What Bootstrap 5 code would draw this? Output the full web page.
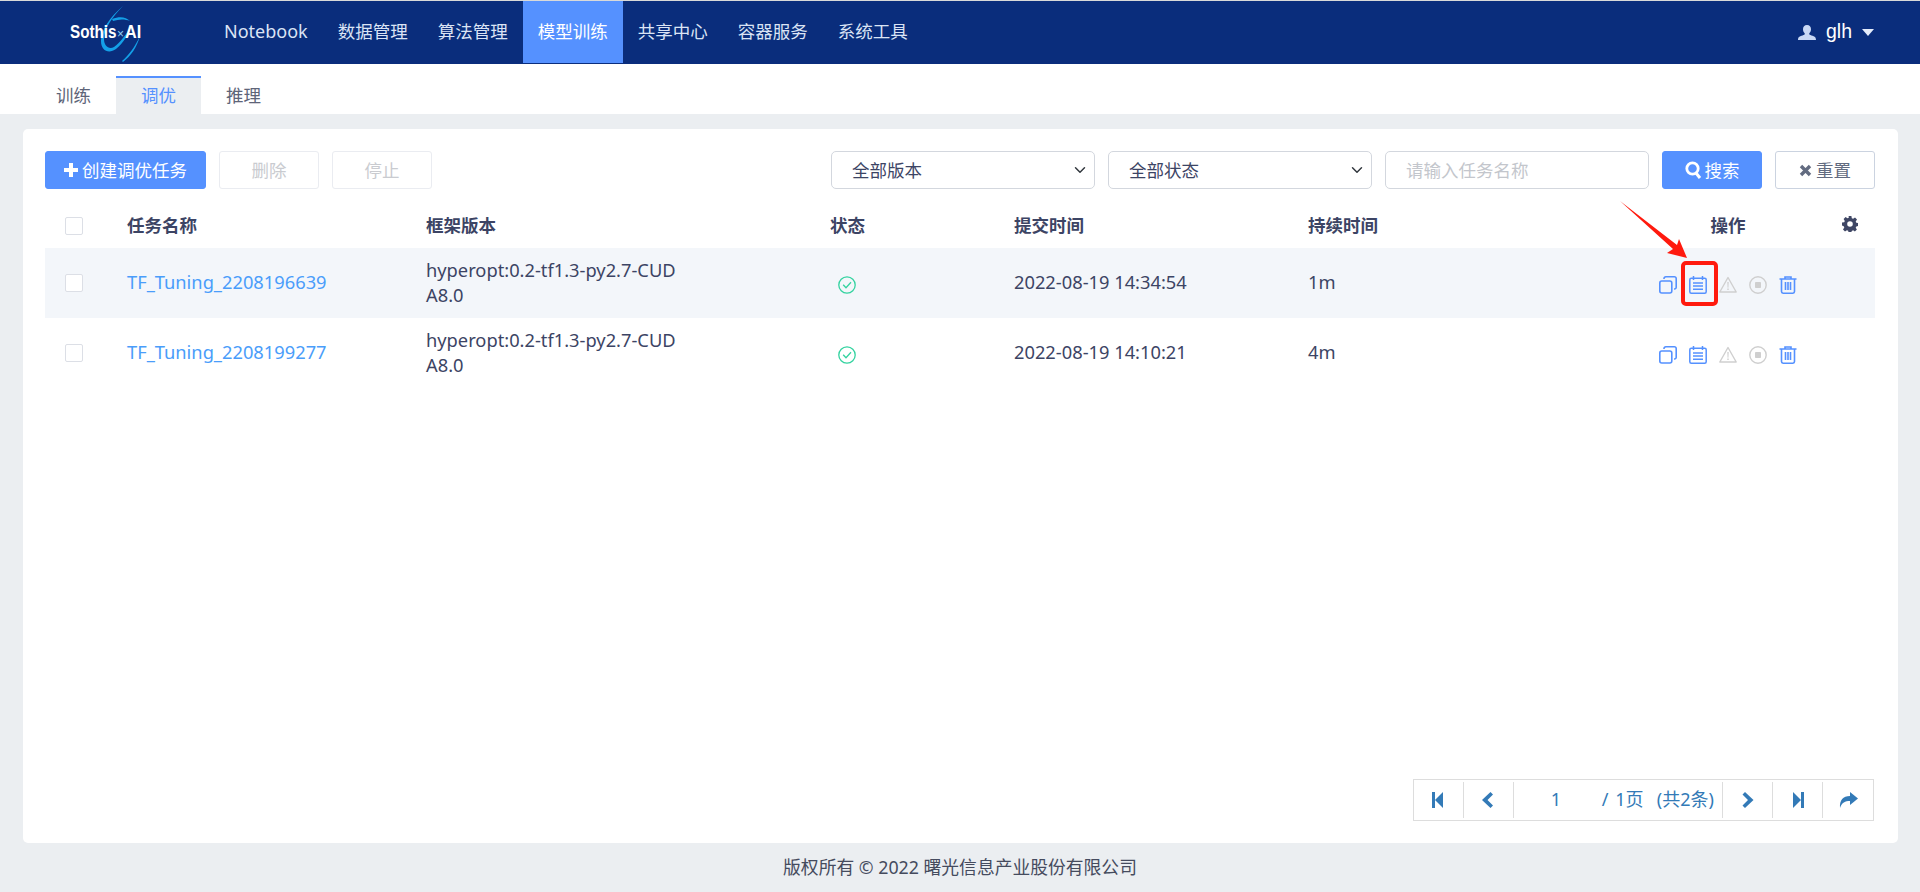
<!DOCTYPE html>
<html lang="zh-CN">
<head>
  <meta charset="UTF-8">
  <title>Sothis AI</title>
  <link href="https://cdn.jsdelivr.net/npm/bootstrap@5.3.0/dist/css/bootstrap.min.css" rel="stylesheet">
  <style>
    html, body { height: 892px; overflow: hidden; }
    body {
      font-family: "Noto Sans", "Noto Sans CJK SC", sans-serif;
      font-size: 17.5px;
      color: #3c4464;
      background: #ebeef1;
    }
    .top-bar { height: 64px; background: #0a2d7c; border-top: 1px solid #d9d9d9; color: #fff; }
    .logo-box { width: 209px; height: 63px; position: relative; flex: none; }
    .logo-box svg { position: absolute; left: 0; top: 0; }
    .logo-text {
      position: absolute; top: 19px; left: 70px; font-family: "Liberation Sans", sans-serif;
      font-weight: 700; font-size: 19px; color: #fff; line-height: 24px;
      transform: scaleX(.8); transform-origin: left center;
    }
    .logo-x { position: absolute; top: 21px; left: 117px; font-family: "Liberation Sans", sans-serif; font-size: 12px; color: #8fd0f5; line-height: 24px; }
    .logo-ai { position: absolute; top: 19px; left: 125px; font-family: "Liberation Sans", sans-serif;
      font-weight: 700; font-size: 19px; color: #fff; line-height: 24px; transform: scaleX(.85); transform-origin: left center; }
    .top-link { padding: 0 15px; height: 62px; line-height: 60px; color: #dbe4f5; text-decoration: none; white-space: nowrap; }
    .top-link.on { background: #5591ff; color: #fff; }
    .latin-link { font-size: 18px; }
    .user-box { margin-right: 46px; color: #fff; font-family: "Liberation Sans", sans-serif; font-size: 19.5px; gap: 10px; height: 62px; }
    .sub-bar { height: 50px; background: #fff; padding: 12px 0 0 31px; }
    .sub-tab { width: 85px; height: 38px; text-align: center; line-height: 34px; color: #5e6478; text-decoration: none; border-top: 2px solid transparent; }
    .sub-tab.on { background: #ebeef1; color: #5591ff; border-top-color: #5591ff; }
    .main-wrap { flex: 1 1 auto; padding: 15px 22px 0 23px; min-height: 0; }
    .main-card { height: 714px; background: #fff; border-radius: 5px; padding: 22px 23px 22px 22px; position: relative; }
    .tool-btn { height: 38px; font-size: 17.5px; padding: 0; border-radius: 3px; line-height: 36px; display: inline-flex; align-items: center; justify-content: center; }
    .btn-make { width: 161px; background: #5591ff; border: 1px solid #5591ff; color: #fff; gap: 4px; }
    .btn-off { width: 100px; background: #fff; border: 1px solid #eaecf1; color: #c9cbd0; }
    .btn-find { width: 100px; background: #5591ff; border: 1px solid #5591ff; color: #fff; gap: 3px; }
    .btn-clear { width: 100px; background: #fff; border: 1px solid #cbd3e0; color: #626b80; gap: 4px; }
    .pick-box, .name-box {
      height: 38px; font-size: 17.5px; border: 1px solid #d3d7de; border-radius: 5px; color: #3c4464;
      padding: 0 20px; box-shadow: none; line-height: 36px;
    }
    .pick-box { width: 264px; background-position: right 6px center; }
    .name-box { width: 264px; }
    .name-box::placeholder { color: #c3c6cc; opacity: 1; }
    .gap-left { margin-left: 13px; }
    .task-table { table-layout: fixed; width: 1830px; margin: 14px 0 0; --bs-table-bg: transparent; color: #3c4464; }
    .task-table th, .task-table td { padding: 0; color: #3c4464; vertical-align: middle; }
    .task-table th { height: 45px; font-weight: 700; font-size: 17.5px; }
    .task-table td { height: 70px; line-height: 25px; font-size: 18.3px; }
    .task-table td.lift-a { padding-bottom: 4px; }
    .task-table td.lift-b { padding-bottom: 2px; }
    .task-table tr.hl td { background: #f3f6fa; }
    .task-table td a { color: #4a9dfa; text-decoration: none; }
    .box-tick { width: 18px; height: 18px; border: 1px solid #dcdfe6; border-radius: 2px; background: #fff; margin-left: 20px; }
    .fw-cell { width: 256px; word-break: break-all; }
    .ops { gap: 12px; padding: 4px 0 0 78px; align-items: center; }
    .gear-spot { position: absolute; right: 17px; top: 13px; line-height: 0; }
    .op-head { position: relative; text-align: center; }
    .pager {
      position: absolute; left: 1390px; top: 650px; width: 461px; height: 42px; border: 1px solid #ddd;
      color: #337ab7; font-size: 18px;
    }
    .pager-cell { width: 50px; height: 36px; border-right: 1px solid #ddd; }
    .pager-cell:last-child { border-right: 0; }
    .pager-mid { width: 210px; height: 36px; border-right: 1px solid #ddd; position: relative; white-space: nowrap; }
    .pager-mid span { position: absolute; top: 3px; line-height: 28px; word-spacing: 2px; }
    .foot-line { height: 49px; line-height: 48px; text-align: center; color: #454b5e; font-size: 17.8px; }
    .mark-box { position: absolute; left: 1658px; top: 132px; width: 37px; height: 45px; border: 4px solid #ff1a0e; border-radius: 5px; }
    .mark-arrow { position: absolute; left: 1590px; top: 65px; }
  </style>
</head>
<body class="d-flex flex-column">
<svg width="0" height="0" class="position-absolute">
  <symbol id="i-copy" viewBox="0 0 18 18"><g fill="none" stroke="#5591ff" stroke-width="1.6"><rect x=".8" y="5" width="12" height="12" rx="2"/><path d="M5 3V2.600A1.800 1.800 0 0 1 6.800.8h8.600a1.800 1.800 0 0 1 1.800 1.800v8.600a1.800 1.800 0 0 1-1.800 1.800H15"/></g></symbol>
  <symbol id="i-note" viewBox="0 0 18 18"><g fill="none" stroke="#5591ff" stroke-width="1.5"><rect x=".8" y="2.200" width="16.400" height="15" rx="1.500"/><path d="M4.500 0v4M13.500 0v4M4 7h10M4 10h10M4 13.300h10"/></g></symbol>
  <symbol id="i-warn" viewBox="0 0 18 18"><g fill="none" stroke="#cfcfcf" stroke-width="1.4"><path d="M9 1.500 17.200 16H.8Z" stroke-linejoin="round"/></g><path d="M8.300 6h1.400l-.3 5.800h-.8ZM8.300 12.600h1.400V14H8.300Z" fill="#cfcfcf"/></symbol>
  <symbol id="i-halt" viewBox="0 0 18 18"><circle cx="9" cy="9" r="8.200" fill="none" stroke="#cfcfcf" stroke-width="1.4"/><rect x="6" y="6" width="6" height="6" rx=".8" fill="#cfcfcf"/></symbol>
  <symbol id="i-bin" viewBox="0 0 18 18"><g fill="none" stroke="#5591ff" stroke-width="1.6"><path d="M.5 3h17M6 3V1h6v2M2.500 3v12.600A1.600 1.600 0 0 0 4.100 17.200h9.800a1.600 1.600 0 0 0 1.600-1.600V3M6.500 6v8M9 6v8M11.500 6v8"/></g></symbol>
  <symbol id="i-ok" viewBox="0 0 18 18"><circle cx="9" cy="9" r="8.200" fill="none" stroke="#34d3a0" stroke-width="1.3"/><path d="M5.200 8.800 8 11.800l5-5.600" fill="none" stroke="#34d3a0" stroke-width="1.3"/></symbol>
</svg>

<nav class="top-bar d-flex align-items-start flex-none">
  <div class="logo-box">
    <svg width="209" height="63" viewBox="0 0 209 63">
      <path d="M123 5C112 16 104 28 104 38c0 7 5 11 10 8 6-4 13-14 18-22-3 8-9 19-16 24-7 5-15 2-15-8 0-11 9-24 22-35Z" fill="#14a0e8"/>
      <path d="M122 60c6-5 13-14 18-25-3 11-9 20-17 26Z" fill="#14a0e8"/>
      <path d="M112 18c8-3 14-2 18 2-5-2-11-2-17 0Z" fill="#14a0e8"/>
    </svg>
    <span class="logo-text">Sothis</span>
    <span class="logo-x">×</span>
    <span class="logo-ai">AI</span>
  </div>
  <a class="top-link latin-link" href="#">Notebook</a>
  <a class="top-link" href="#">数据管理</a>
  <a class="top-link" href="#">算法管理</a>
  <a class="top-link on" href="#">模型训练</a>
  <a class="top-link" href="#">共享中心</a>
  <a class="top-link" href="#">容器服务</a>
  <a class="top-link" href="#">系统工具</a>
  <div class="user-box ms-auto d-flex align-items-center">
    <svg width="18" height="15" viewBox="0 0 18 15"><path d="M9 0c2.600 0 4 1.800 4 4.200 0 1.800-.8 3.200-1.800 4.200 0 1 .6 1.500 2.300 2 2.500.8 4.500 1.200 4.500 4.600H0c0-3.400 2-3.800 4.500-4.600 1.700-.5 2.300-1 2.300-2C5.800 7.400 5 6 5 4.200 5 1.800 6.400 0 9 0Z" fill="#c9d8f5"/></svg>
    <span>glh</span>
    <svg width="12" height="7" viewBox="0 0 12 7"><path d="M0 0h12L6 7Z" fill="#e4ecfb"/></svg>
  </div>
</nav>

<div class="sub-bar d-flex">
  <a class="sub-tab" href="#">训练</a>
  <a class="sub-tab on" href="#">调优</a>
  <a class="sub-tab" href="#">推理</a>
</div>

<div class="main-wrap">
  <div class="main-card">
    <div class="d-flex align-items-center">
      <button class="tool-btn btn-make" type="button">
        <svg width="14" height="14" viewBox="0 0 14 14"><path d="M5 0h4v5h5v4H9v5H5V9H0V5h5Z" fill="#fff"/></svg>创建调优任务
      </button>
      <button class="tool-btn btn-off gap-left" type="button">删除</button>
      <button class="tool-btn btn-off gap-left" type="button">停止</button>
      <select class="form-select pick-box ms-auto"><option>全部版本</option></select>
      <select class="form-select pick-box gap-left"><option>全部状态</option></select>
      <input class="form-control name-box gap-left" type="text" placeholder="请输入任务名称">
      <button class="tool-btn btn-find gap-left" type="button">
        <svg width="17" height="18" viewBox="0 0 17 18"><circle cx="7.500" cy="7.500" r="5.700" fill="none" stroke="#fff" stroke-width="2.800"/><path d="m11 12 4 5" stroke="#fff" stroke-width="3"/></svg>搜索
      </button>
      <button class="tool-btn btn-clear gap-left" type="button">
        <svg width="13" height="13" viewBox="0 0 13 13"><path d="M2 2l9 9M11 2l-9 9" stroke="#626b80" stroke-width="3.400"/></svg>重置
      </button>
    </div>

    <table class="table table-borderless align-middle task-table">
      <colgroup><col style="width:82px"><col style="width:299px"><col style="width:404px"><col style="width:184px"><col style="width:294px"><col style="width:273px"><col style="width:294px"></colgroup>
      <thead>
        <tr>
          <th><div class="box-tick"></div></th>
          <th>任务名称</th>
          <th>框架版本</th>
          <th>状态</th>
          <th>提交时间</th>
          <th>持续时间</th>
          <th class="op-head">操作
            <span class="gear-spot">
              <svg width="16" height="16" viewBox="0 0 16 16"><path fill-rule="evenodd" d="M6.600 0h2.800l.4 2.200 1.300.6 1.900-1.200 2 2-1.300 1.800.6 1.400 2.200.4v2.800l-2.200.4-.6 1.300 1.200 1.900-2 2-1.800-1.300-1.400.6-.4 2.100H6.600l-.4-2.200-1.300-.6-1.900 1.200-2-2 1.300-1.800-.6-1.400L0 9.400V6.600l2.200-.4.600-1.300-1.200-1.900 2-2 1.800 1.300 1.400-.6ZM8 5.200a2.800 2.800 0 1 0 0 5.600 2.800 2.800 0 0 0 0-5.600Z" fill="#3f4765"/></svg>
            </span>
          </th>
        </tr>
      </thead>
      <tbody>
        <tr class="hl">
          <td><div class="box-tick"></div></td>
          <td class="lift-a"><a href="#">TF_Tuning_2208196639</a></td>
          <td class="lift-b"><div class="fw-cell">hyperopt:0.2-tf1.3-py2.7-CUDA8.0</div></td>
          <td class="lift-b"><svg class="ms-2" width="18" height="18"><use href="#i-ok"/></svg></td>
          <td class="lift-a">2022-08-19 14:34:54</td>
          <td class="lift-a">1m</td>
          <td>
            <div class="d-flex ops">
              <svg width="18" height="18"><use href="#i-copy"/></svg>
              <svg width="18" height="18"><use href="#i-note"/></svg>
              <svg width="18" height="18"><use href="#i-warn"/></svg>
              <svg width="18" height="18"><use href="#i-halt"/></svg>
              <svg width="18" height="18"><use href="#i-bin"/></svg>
            </div>
          </td>
        </tr>
        <tr>
          <td><div class="box-tick"></div></td>
          <td class="lift-a"><a href="#">TF_Tuning_2208199277</a></td>
          <td class="lift-b"><div class="fw-cell">hyperopt:0.2-tf1.3-py2.7-CUDA8.0</div></td>
          <td class="lift-b"><svg class="ms-2" width="18" height="18"><use href="#i-ok"/></svg></td>
          <td class="lift-a">2022-08-19 14:10:21</td>
          <td class="lift-a">4m</td>
          <td>
            <div class="d-flex ops">
              <svg width="18" height="18"><use href="#i-copy"/></svg>
              <svg width="18" height="18"><use href="#i-note"/></svg>
              <svg width="18" height="18"><use href="#i-warn"/></svg>
              <svg width="18" height="18"><use href="#i-halt"/></svg>
              <svg width="18" height="18"><use href="#i-bin"/></svg>
            </div>
          </td>
        </tr>
      </tbody>
    </table>

    <div class="pager d-flex align-items-center">
      <div class="pager-cell d-flex align-items-center justify-content-center"><svg width="12" height="16" viewBox="0 0 12 16"><path d="M0 0h3v16H0ZM11 0v16L3 8Z" fill="#337ab7"/></svg></div>
      <div class="pager-cell d-flex align-items-center justify-content-center"><svg width="12" height="16" viewBox="0 0 12 16"><path d="M8.500 0 11 2.500 5.500 8l5.500 5.500L8.500 16 0 8Z" fill="#337ab7"/></svg></div>
      <div class="pager-mid"><span style="left:37px">1</span><span style="left:88px">/ 1页&nbsp; (共2条)</span></div>
      <div class="pager-cell d-flex align-items-center justify-content-center"><svg width="12" height="16" viewBox="0 0 12 16"><path d="M3 0 .5 2.500 6 8 .5 13.500 3 16l8.500-8Z" fill="#337ab7"/></svg></div>
      <div class="pager-cell d-flex align-items-center justify-content-center"><svg width="12" height="16" viewBox="0 0 12 16"><path d="M12 0H9v16h3ZM1 0v16l8-8Z" fill="#337ab7"/></svg></div>
      <div class="pager-cell d-flex align-items-center justify-content-center"><svg width="19" height="16" viewBox="0 0 19 16"><path d="M11 0l8 6.500L11 13V9C6 9 3 10.500 1 16 .5 8 4 4 11 4Z" fill="#337ab7"/></svg></div>
    </div>

    <div class="mark-box"></div>
    <svg class="mark-arrow" width="80" height="70" viewBox="0 0 80 70">
      <path d="M7 7 64 51 66 45 74 64 54 59 60 55Z" fill="#ff1a0e"/>
    </svg>
  </div>
</div>

<div class="foot-line">版权所有 © 2022 曙光信息产业股份有限公司</div>
</body>
</html>
